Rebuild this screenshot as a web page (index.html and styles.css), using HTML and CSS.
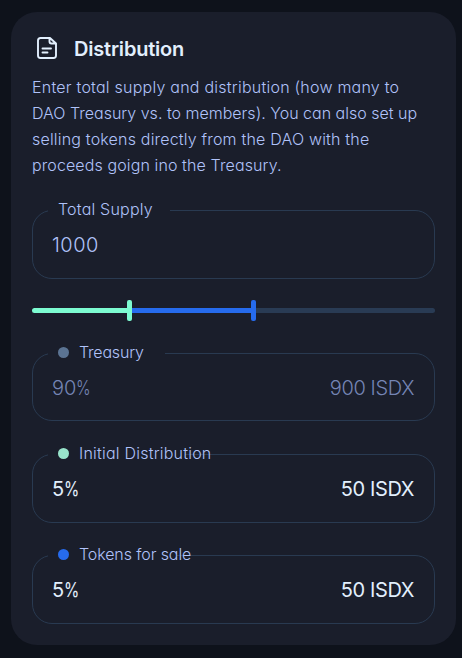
FILE: index.html
```html
<!DOCTYPE html>
<html lang="en">
<head>
<meta charset="utf-8">
<title>Distribution</title>
<link rel="stylesheet" href="styles.css">
</head>
<body>
<main class="card">
  <header class="card-header">
    <svg class="icon" viewBox="0 0 20 22" fill="none" stroke="currentColor" stroke-width="1.9" stroke-linecap="round" stroke-linejoin="round">
      <path d="M12.500 1H3.500Q1 1 1 3.500V18.500Q1 21 3.500 21H16.500Q19 21 19 18.500V6.500L13 1H12.500V4.500Q12.500 6.500 14.500 6.500H19M5.500 11.500H14M5.500 15.500H10.500"/>
    </svg>
    <h1 class="title">Distribution</h1>
  </header>
  <p class="intro">
    <span class="line line-1">Enter total supply and distribution (how many to</span>
    <span class="line line-2">DAO Treasury vs. to members). You can also set up</span>
    <span class="line line-3">selling tokens directly from the DAO with the</span>
    <span class="line line-4">proceeds goign ino the Treasury.</span>
  </p>
  <section class="field supply">
    <div class="label label-supply"><span>Total Supply</span></div>
    <span class="value">1000</span>
  </section>
  <div class="slider">
    <div class="segment initial"></div>
    <div class="thumb initial"></div>
    <div class="segment sale"></div>
    <div class="thumb sale"></div>
    <div class="segment rest"></div>
  </div>
  <section class="field treasury">
    <div class="label label-treasury"><i class="dot"></i><span>Treasury</span></div>
    <span class="value">90<span class="percent">%</span></span><span class="value amount">900 ISDX</span>
  </section>
  <section class="field members">
    <div class="label label-members"><i class="dot"></i><span>Initial Distribution</span></div>
    <span class="value">5<span class="percent">%</span></span><span class="value amount">50 ISDX</span>
  </section>
  <section class="field tokens">
    <div class="label label-tokens"><i class="dot"></i><span>Tokens for sale</span></div>
    <span class="value">5<span class="percent">%</span></span><span class="value amount">50 ISDX</span>
  </section>
</main>
</body>
</html>
```
FILE: styles.css
```css
* { box-sizing: border-box; }
body {
  margin: 0;
  height: 658px;
  padding: 12px 6px 13px 11px;
  background: #0e121b;
  color: #b0c2f9;
  font-family: Inter, "Liberation Sans", sans-serif;
  font-feature-settings: "cv11";
  font-weight: 300;
  overflow: hidden;
}
.card {
  height: 633px;
  padding: 24px 21px 0;
  border-radius: 26px;
  background: #1a1e2b;
}
.card-header {
  display: flex;
  align-items: center;
  height: 26px;
  padding-left: 5px;
  color: #e2effd;
}
.icon { width: 20px; height: 22px; margin-top: -2px; }
.title {
  margin: 0 0 0 17px;
  font-size: 20px;
  line-height: 26px;
  font-weight: 600;
  letter-spacing: -0.2px;
}
.intro { margin: 12px 0 0; font-size: 16px; line-height: 26px; }
.line { display: block; white-space: nowrap; }
.line-1 { letter-spacing: 0.235px; }
.line-3 { letter-spacing: 0.19px; }
.line-4 { letter-spacing: 0.11px; }
.field {
  position: relative;
  display: flex;
  justify-content: space-between;
  height: 69px;
  padding: 21px 20px 0 19px;
  border: 1px solid #293a51;
  border-radius: 20px;
}
.supply { margin-top: 32px; }
.value { font-size: 20px; line-height: 26px; }
.supply .value { letter-spacing: 0.5px; }
.amount { letter-spacing: -0.4px; }
.percent { display: inline-block; transform: scaleX(0.78); transform-origin: left; }
.label {
  position: absolute;
  top: -13px;
  left: 15px;
  display: flex;
  align-items: center;
  height: 22px;
  padding-left: 10px;
  background: #1a1e2b;
  font-size: 16px;
  white-space: nowrap;
}
.label-supply { width: 122px; letter-spacing: 0.2px; }
.label-treasury { width: 117px; letter-spacing: -0.2px; }
.label-members { width: 137px; letter-spacing: 0.22px; }
.label-tokens { width: 129px; letter-spacing: -0.1px; }
.dot { flex: none; width: 11px; height: 11px; margin-right: 10px; border-radius: 50%; background: #5b7493; }
.members .dot { background: #98e4cb; }
.tokens .dot { background: #266bed; }
.slider { display: flex; align-items: center; height: 22px; margin-top: 20px; }
.segment { height: 5px; }
.segment.initial { width: 95px; border-radius: 3px 0 0 3px; }
.segment.sale { width: 119px; }
.segment.rest { flex: 1; border-radius: 0 3px 3px 0; background: #293b54; }
.thumb { width: 5px; height: 21px; border-radius: 2px; }
.initial { background: #7dfbd1; }
.sale { background: #266bed; }
.treasury { height: 68px; margin-top: 32px; }
.treasury .value { color: #7585b5; }
.members { margin-top: 33px; }
.tokens { margin-top: 32px; }
.members .value, .tokens .value { color: #e2effd; font-weight: 400; }
```
